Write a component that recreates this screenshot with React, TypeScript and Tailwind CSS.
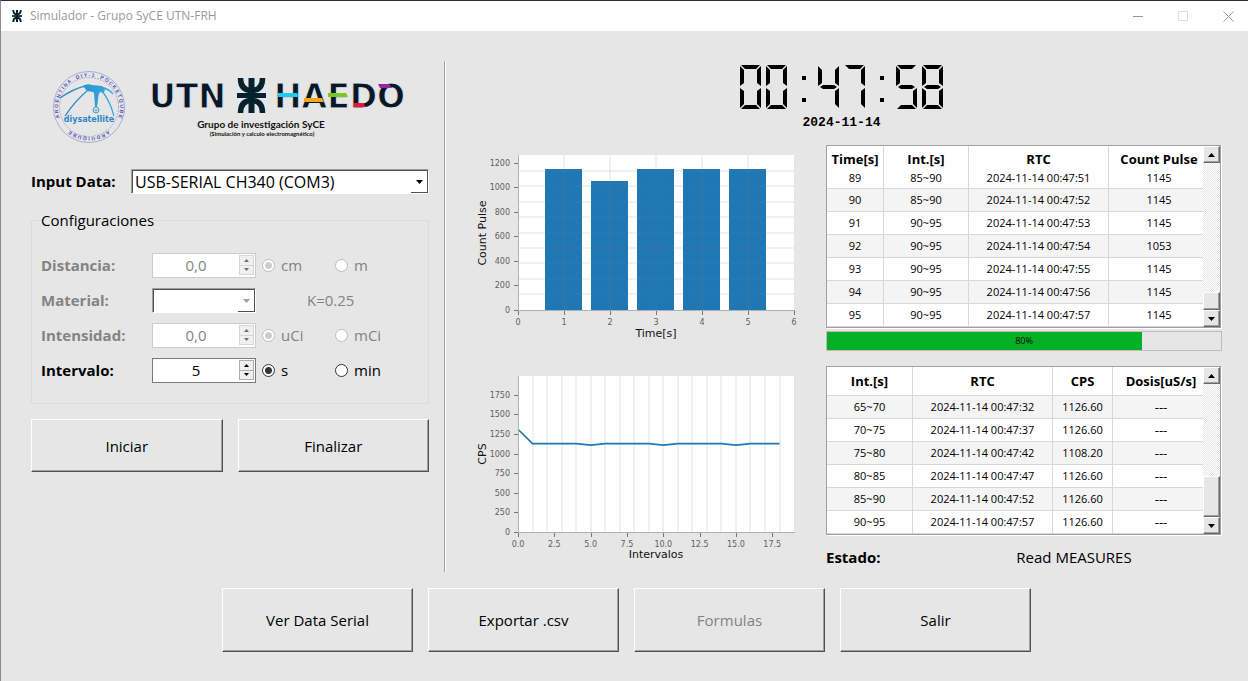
import React from "react";

const UI = "font-['Open_Sans','Noto_Sans',sans-serif]";

const SEGMENTS: Record<string, string> = {
  a: "1,0 20,0 16,4 5,4",
  b: "21,1 21,21 17,18 17,5",
  c: "21,23 21,43 17,39 17,26",
  d: "1,44 20,44 16,40 5,40",
  e: "0,23 0,43 4,39 4,26",
  f: "0,1 0,21 4,18 4,5",
  g: "2,22 5,20 16,20 19,22 16,24 5,24",
};

const LIT: Record<string, string> = {
  "0": "abcdef",
  "4": "bcfg",
  "5": "acdfg",
  "7": "abc",
  "8": "abcdefg",
};

function LcdClock({ value }: { value: string }) {
  return (
    <svg className="shrink-0" role="img" aria-label={value} width="203" height="44" viewBox="0 0 203 44">
      {value.split("").map((ch, i) => (
        <g key={i} transform={`translate(${i * 26} 0)`}>
          {ch === ":" ? (
            <>
              <rect x="10" y="11" width="4" height="4" />
              <rect x="10" y="33" width="4" height="4" />
            </>
          ) : (
            LIT[ch].split("").map((s) => <polygon key={s} points={SEGMENTS[s]} />)
          )}
        </g>
      ))}
    </svg>
  );
}

function Emblem() {
  return (
    <g fill="none" stroke="#06222f" strokeWidth="5">
      <path d="M14.5 0V35" strokeWidth="6" />
      <path d="M0 17.5H29" strokeWidth="5" />
      <path d="M3.500 0C3.500 8 7 12.500 14.500 12.500S25.500 8 25.500 0" strokeWidth="5.500" />
      <path d="M3.500 35C3.500 27 7 22.500 14.500 22.500S25.500 27 25.500 35" strokeWidth="5.500" />
    </g>
  );
}

function SatelliteLogo() {
  return (
    <svg className="shrink-0" width="76" height="76" viewBox="0 0 76 76" role="img" aria-label="diysatellite">
      <defs>
        <path id="ring" d="M13 57A31 31 0 1 1 63 57" />
        <path id="ringLow" d="M64 54A31 31 0 0 1 12 54" />
        <linearGradient id="sky" gradientUnits="userSpaceOnUse" x1="8" y1="0" x2="66" y2="0">
          <stop offset="0" stopColor="#2d7fc0" />
          <stop offset="1" stopColor="#35aee6" />
        </linearGradient>
      </defs>
      <g fill="none" stroke="#9a9ad4" strokeWidth="0.8">
        <circle cx="38" cy="38" r="35.5" />
        <circle cx="38" cy="38" r="29.500" strokeDasharray="2 1" />
      </g>
      <g className="font-['Liberation_Sans',sans-serif] font-bold" fill="#5252b4" fontSize="5">
        <text><textPath href="#ring" startOffset="50%" textAnchor="middle">A R G E N T I N A &#160;&#160; D I Y - 1 &#160;&#160; P O C K E T Q U B E</textPath></text>
        <text><textPath href="#ringLow" startOffset="50%" textAnchor="middle">A R D U I Q U B E</textPath></text>
      </g>
      <path d="M32 17Q36 14 41 16L51 17 54 20 53 24 49 23 48 25 44 25 42 23 36 22Z" fill="url(#sky)" />
      <path d="M34 17Q22 20 9 29M37 21Q24 32 14 47M50 18Q58 20 62 25M51 22Q59 32 63 47" fill="none" stroke="url(#sky)" strokeWidth="1.300" />
      <path d="M43 23H48L46 38H44Z" fill="url(#sky)" />
      <circle cx="45" cy="41" r="3" fill="none" stroke="#4b9ccc" />
      <path d="M42.500 41H47.500M45 41V44" stroke="#4b9ccc" strokeWidth="0.800" />
      <text x="38" y="53" textAnchor="middle" fill="#2d86c8" fontSize="8" className="font-['DejaVu_Sans',sans-serif] font-bold">diysatellite</text>
    </svg>
  );
}

function UtnLogo() {
  return (
    <svg className="shrink-0" width="260" height="68" viewBox="0 0 260 68" role="img" aria-label="UTN Haedo">
      <g fill="#06182a" stroke="#e6e6e6" strokeWidth="1" fontSize="33" className="font-['DejaVu_Sans',sans-serif] font-bold">
        <text x="0" y="35">UTN</text>
        <text x="125" y="35">HAEDO</text>
      </g>
      <g transform="translate(88 5)"><Emblem /></g>
      <path d="M129 20H148L150 24H129Z" fill="#19cdf2" />
      <path d="M155 25H173L175 29H155Z" fill="#f7a416" />
      <path d="M179 20H197L199 24H179Z" fill="#7cc823" />
      <path d="M205 30H214L217 34H205Z" fill="#ef1335" />
      <path d="M229 11H240L243 15H231Z" fill="#95259e" />
      <g className="font-['Lato',sans-serif] font-bold" fill="#111" textAnchor="middle">
        <text x="112" y="55" fontSize="10">Grupo de investigación SyCE</text>
        <text x="113" y="63" fontSize="6">(Simulación y calculo electromagnético)</text>
      </g>
    </svg>
  );
}

function Triangle({ up = false, color = "#000" }: { up?: boolean; color?: string }) {
  return (
    <svg width="7" height="4" viewBox="0 0 7 4" aria-hidden="true">
      <path d={up ? "M0 4 3.500 0 7 4Z" : "M0 0 3.500 4 7 0Z"} fill={color} />
    </svg>
  );
}

function SmallTriangle({ up = false, color = "#000" }: { up?: boolean; color?: string }) {
  return (
    <svg width="5" height="3" viewBox="0 0 5 3" aria-hidden="true">
      <path d={up ? "M0 3 2.500 0 5 3Z" : "M0 0 2.500 3 5 0Z"} fill={color} />
    </svg>
  );
}

function Combo({ id, options, disabled }: { id: string; options: string[]; disabled?: boolean }) {
  return (
    <div className="relative h-[25px] w-full border border-t-[#a0a0a0] border-l-[#a0a0a0] border-r-white border-b-white">
      <select
        id={id}
        disabled={disabled}
        className="block h-full w-full appearance-none border-t border-l border-[#505050] bg-white pl-[2px] text-[16px] leading-[20px] text-black opacity-100 outline-none"
      >
        {options.map((o) => <option key={o}>{o}</option>)}
      </select>
      <span className="pointer-events-none absolute top-px right-0 bottom-0 flex w-[17px] items-center justify-center border-r border-b border-[#505050]">
        <Triangle color={disabled ? "#a0a0a0" : "#000"} />
      </span>
    </div>
  );
}

function Spin({ id, value, disabled }: { id: string; value: string; disabled?: boolean }) {
  const tone = disabled ? "border-[#cccccc] text-[#838383]" : "border-[#7a7a7a] text-black";
  const step = disabled ? "border-[#d6d6d6] bg-[#f0f0f0]" : "border-[#adadad] bg-[#f0f0f0]";
  const arrow = disabled ? "#6d6d6d" : "#000";
  return (
    <div className={`flex h-[25px] w-full items-stretch border bg-white ${tone}`}>
      <input id={id} type="text" defaultValue={value} disabled={disabled} className="w-0 flex-1 bg-transparent text-center text-[15px] outline-none" />
      <div className="flex w-[16px] flex-col pt-px pr-px pb-[2px]">
        <button type="button" aria-label="Aumentar" disabled={disabled} className={`flex flex-1 items-center justify-center border ${step}`}><SmallTriangle up color={arrow} /></button>
        <button type="button" aria-label="Disminuir" disabled={disabled} className={`flex flex-1 items-center justify-center border border-t-0 ${step}`}><SmallTriangle color={arrow} /></button>
      </div>
    </div>
  );
}

function Radio({ name, label, checked, disabled }: { name: string; label: string; checked?: boolean; disabled?: boolean }) {
  return (
    <label className={`flex items-center gap-[6px] ${disabled ? "text-[#838383]" : "text-black"}`}>
      <input
        type="radio"
        name={name}
        defaultChecked={checked}
        disabled={disabled}
        className="size-[13px] shrink-0 appearance-none rounded-full border border-[#333] bg-white checked:bg-[radial-gradient(circle,#333_0_3px,#fff_4px)] disabled:border-[#bcbcbc] disabled:checked:bg-[radial-gradient(circle,#ccc_0_3px,#fff_4px)]"
      />
      {label}
    </label>
  );
}

function PushButton({ children, disabled, tall }: { children: string; disabled?: boolean; tall?: boolean }) {
  return (
    <button
      type="button"
      disabled={disabled}
      className={`flex-1 border border-t-white border-l-white border-r-[#505050] border-b-[#505050] pt-px text-[15px] shadow-[inset_-1px_-1px_0_#a0a0a0] disabled:text-[#838383] ${tall ? "h-[64px]" : "h-[53px]"}`}
    >
      {children}
    </button>
  );
}

function ScrollBar({ thumb }: { thumb: string }) {
  const raised = "border border-t-white border-l-white border-r-[#696969] border-b-[#696969] shadow-[inset_-1px_-1px_0_#a0a0a0] bg-[#e6e6e6]";
  return (
    <div className="flex w-[17px] shrink-0 flex-col bg-[repeating-conic-gradient(#e6e6e6_0_25%,#fff_0_50%)] bg-size-[2px_2px]">
      <button type="button" aria-label="Subir" className={`flex h-[17px] items-center justify-center ${raised}`}><Triangle up /></button>
      <div className="flex-1" />
      <div className={`${thumb} ${raised}`} />
      <button type="button" aria-label="Bajar" className={`flex h-[17px] items-center justify-center ${raised}`}><Triangle /></button>
    </div>
  );
}

type GridProps = {
  cols: string[];
  heads: string[];
  rows: string[][];
  headClass: string;
  firstRow: string;
  shade: number;
  thumb: string;
};

function DataGrid({ cols, heads, rows, headClass, firstRow, shade, thumb }: GridProps) {
  return (
    <div className="mr-px flex border border-[#a0a0a0] bg-white shadow-[1px_1px_0_#fff]">
      <table className="w-0 flex-1 table-fixed border-separate border-spacing-0 text-center">
        <colgroup>{cols.map((c, i) => <col key={i} className={c} />)}</colgroup>
        <thead>
          <tr>
            {heads.map((h) => (
              <th key={h} className={`border-r border-[#d8d8d8] p-0 text-[13px] leading-[16px] font-bold whitespace-nowrap last:border-r-0 last:pl-[6px] ${headClass}`}>{h}</th>
            ))}
          </tr>
        </thead>
        <tbody className="text-[11px] leading-[14px]">
          {rows.map((r, i) => (
            <tr key={i} className={i % 2 === shade ? "bg-[#f4f4f4]" : "bg-white"}>
              {r.map((c, j) => (
                <td key={j} className={`border-r border-b border-[#d8d8d8] p-0 whitespace-nowrap last:border-r-0 last:pl-[6px] ${c === "---" ? "text-[13px]" : ""} ${i === 0 ? firstRow : "h-[23px]"}`}>{c}</td>
              ))}
            </tr>
          ))}
        </tbody>
      </table>
      <ScrollBar thumb={thumb} />
    </div>
  );
}

const PULSES: [number, number][] = [[1, 1145], [2, 1053], [3, 1145], [4, 1145], [5, 1145]];
const CPS = [1310, 1127, 1127, 1127, 1127, 1108, 1127, 1127, 1127, 1127, 1108, 1127, 1127, 1127, 1127, 1108, 1127, 1127, 1127];

type AxesProps = {
  bottom: number;
  yTicks: { at: number; text: string }[];
  xTicks: { at: number; text: string }[];
  xLabel: string;
  yLabel: string;
};

function Axes({ bottom, yTicks, xTicks, xLabel, yLabel }: AxesProps) {
  return (
    <>
      <path d={`M57.500 10V${bottom + 0.5}H334`} fill="none" stroke="#b0b0b0" />
      <g stroke="#777">
        {yTicks.map((t) => <path key={t.text} d={`M53 ${Math.round(t.at) + 0.5}H57`} />)}
        {xTicks.map((t) => <path key={t.text} d={`M${Math.round(t.at) + 0.5} ${bottom + 1}v4`} />)}
      </g>
      <g fontSize="8" fill="#606060">
        {yTicks.map((t) => <text key={t.text} x="49" y={Math.round(t.at) + 3} textAnchor="end">{t.text}</text>)}
        {xTicks.map((t) => <text key={t.text} x={t.at} y={bottom + 15} textAnchor="middle">{t.text}</text>)}
      </g>
      <g fontSize="11" fill="#111" textAnchor="middle">
        <text x="195" y="192">{xLabel}</text>
        <text transform="translate(25 88) rotate(-90)">{yLabel}</text>
      </g>
    </>
  );
}

function PulseChart() {
  return (
    <svg viewBox="0 0 350 206" className="w-full font-['DejaVu_Sans',sans-serif]" role="img" aria-label="Count Pulse">
      <rect x="57" y="10" width="276" height="155" fill="#fff" />
      {PULSES.map(([t, v]) => {
        const top = Math.round(165 - v * 0.1228);
        return <rect key={t} x={38 + t * 46} y={top} width="37" height={165 - top} fill="#1f77b4" />;
      })}
      <g stroke="#808080" strokeOpacity="0.11" strokeWidth="2">
        {[1, 2, 3, 4, 5, 6, 7, 8, 9].map((k) => <path key={k} d={`M58 ${Math.round(164.5 - k * 15.4)}H333`} />)}
        {[1, 2, 3, 4, 5].map((k) => <path key={k} d={`M${57 + k * 46} 10V165`} />)}
      </g>
      <Axes
        bottom={165}
        yTicks={[0, 200, 400, 600, 800, 1000, 1200].map((v) => ({ at: 165 - v * 0.1228, text: String(v) }))}
        xTicks={[0, 1, 2, 3, 4, 5, 6].map((v) => ({ at: 57 + v * 46, text: String(v) }))}
        xLabel="Time[s]"
        yLabel="Count Pulse"
      />
    </svg>
  );
}

function CpsChart() {
  const x = (v: number) => 57 + v * 14.53;
  const y = (v: number) => 166 - v * 0.0784;
  return (
    <svg viewBox="0 0 350 206" className="w-full font-['DejaVu_Sans',sans-serif]" role="img" aria-label="CPS">
      <rect x="57" y="10" width="276" height="156" fill="#fff" />
      <g stroke="#808080" strokeOpacity="0.11" strokeWidth="2">
        {CPS.slice(1).map((_, k) => <path key={k} d={`M${Math.round(x(k + 1))} 10V166`} />)}
      </g>
      <polyline points={CPS.map((v, k) => `${x(k)},${y(v)}`).join(" ")} fill="none" stroke="#1f77b4" strokeWidth="1.600" />
      <Axes
        bottom={166}
        yTicks={[0, 250, 500, 750, 1000, 1250, 1500, 1750].map((v) => ({ at: y(v), text: String(v) }))}
        xTicks={[0, 2.5, 5, 7.5, 10, 12.5, 15, 17.5].map((v) => ({ at: x(v), text: v.toFixed(1) }))}
        xLabel="Intervalos"
        yLabel="CPS"
      />
    </svg>
  );
}

const PULSE_ROWS = [
  ["89", "85~90", "2024-11-14 00:47:51", "1145"],
  ["90", "85~90", "2024-11-14 00:47:52", "1145"],
  ["91", "90~95", "2024-11-14 00:47:53", "1145"],
  ["92", "90~95", "2024-11-14 00:47:54", "1053"],
  ["93", "90~95", "2024-11-14 00:47:55", "1145"],
  ["94", "90~95", "2024-11-14 00:47:56", "1145"],
  ["95", "90~95", "2024-11-14 00:47:57", "1145"],
];

const CPS_ROWS = [
  ["65~70", "2024-11-14 00:47:32", "1126.60", "---"],
  ["70~75", "2024-11-14 00:47:37", "1126.60", "---"],
  ["75~80", "2024-11-14 00:47:42", "1108.20", "---"],
  ["80~85", "2024-11-14 00:47:47", "1126.60", "---"],
  ["85~90", "2024-11-14 00:47:52", "1126.60", "---"],
  ["90~95", "2024-11-14 00:47:57", "1126.60", "---"],
];

function TitleBar() {
  return (
    <header className="flex h-[30px] items-center justify-between bg-white pl-[10px]">
      <div className="flex items-center gap-[7px]">
        <svg width="12" height="12" viewBox="-2 0 33 35" aria-hidden="true"><Emblem /></svg>
        <h1 className="text-[12px] text-[#999]">Simulador - Grupo SyCE UTN-FRH</h1>
      </div>
      <div className="flex gap-[5px]">
        <button type="button" aria-label="Minimizar" className="flex h-[30px] w-[40px] items-center justify-center">
          <svg width="11" height="11" viewBox="0 0 11 11"><path d="M0 5.500H10" stroke="#999" /></svg>
        </button>
        <button type="button" aria-label="Maximizar" disabled className="flex h-[30px] w-[40px] items-center justify-center">
          <svg width="11" height="11" viewBox="0 0 11 11"><rect x="0.500" y="0.500" width="9" height="9" fill="none" stroke="#ddd" /></svg>
        </button>
        <button type="button" aria-label="Cerrar" className="flex h-[30px] w-[40px] items-center justify-center">
          <svg width="11" height="11" viewBox="0 0 11 11"><path d="M0.500 0.500 10.500 10.500M10.500 0.500 0.500 10.500" stroke="#999" /></svg>
        </button>
      </div>
    </header>
  );
}

function Settings() {
  const label = "font-bold";
  const row = "grid h-[25px] grid-cols-[105px_104px_67px_1fr] items-center gap-x-[6px]";
  return (
    <fieldset className="mt-[15px] border border-[#dcdcdc] px-[9px] pb-[20px] text-[15px]">
      <legend className="leading-[22px]">Configuraciones</legend>
      <div className="mt-[22px] flex flex-col gap-[10px]">
        <div className={`${row} text-[#838383]`}>
          <label htmlFor="distancia" className={label}>Distancia:</label>
          <Spin id="distancia" value="0,0" disabled />
          <Radio name="distancia-u" label="cm" checked disabled />
          <Radio name="distancia-u" label="m" disabled />
        </div>
        <div className={`${row} text-[#838383]`}>
          <label htmlFor="material" className={label}>Material:</label>
          <Combo id="material" options={[""]} disabled />
          <output className="col-span-2 pl-[45px]">K=0.25</output>
        </div>
        <div className={`${row} text-[#838383]`}>
          <label htmlFor="intensidad" className={label}>Intensidad:</label>
          <Spin id="intensidad" value="0,0" disabled />
          <Radio name="intensidad-u" label="uCi" checked disabled />
          <Radio name="intensidad-u" label="mCi" disabled />
        </div>
        <div className={row}>
          <label htmlFor="intervalo" className={label}>Intervalo:</label>
          <Spin id="intervalo" value="5" />
          <Radio name="intervalo-u" label="s" checked />
          <Radio name="intervalo-u" label="min" />
        </div>
      </div>
    </fieldset>
  );
}

export default function App() {
  return (
    <div className={`flex min-h-screen flex-col border-t border-l border-t-[#2b2d38] border-l-[#8a8c94] bg-[#e6e6e6] text-black ${UI}`}>
      <TitleBar />
      <main className="flex flex-col pt-[30px] pr-[26px] pl-[30px]">
        <div className="grid grid-cols-[398fr_2px_761fr] gap-x-[15px]">
          <section className="flex flex-col">
            <div className="flex h-[92px] items-center gap-[22px] pl-[20px]">
              <SatelliteLogo />
              <UtnLogo />
            </div>
            <div className="mt-[16px] flex items-center">
              <label htmlFor="puerto" className="w-[100px] shrink-0 text-[15px] font-bold">Input Data:</label>
              <Combo id="puerto" options={["USB-SERIAL CH340 (COM3)"]} />
            </div>
            <Settings />
            <div className="mt-[15px] flex gap-[15px]">
              <PushButton>Iniciar</PushButton>
              <PushButton>Finalizar</PushButton>
            </div>
          </section>
          <div className="border-r border-l border-r-white border-l-[#a0a0a0]" />
          <section className="flex flex-col">
            <div className="flex h-[84px] flex-col items-center pt-[4px]">
              <LcdClock value="00:47:58" />
              <time className="mt-[6px] font-['Liberation_Mono',monospace] text-[13px] leading-[16px] font-bold">2024-11-14</time>
            </div>
            <div className="grid grid-cols-[350fr_396fr] gap-x-[15px]">
              <div className="flex flex-col gap-[15px]">
                <PulseChart />
                <CpsChart />
              </div>
              <div className="flex flex-col">
                <DataGrid
                  cols={["w-[57px]", "w-[85px]", "w-[140px]", "w-auto"]}
                  heads={["Time[s]", "Int.[s]", "RTC", "Count Pulse"]}
                  rows={PULSE_ROWS}
                  headClass="h-[25px]"
                  firstRow="h-[18px] pb-[3px]"
                  shade={1}
                  thumb="h-[18px]"
                />
                <div role="progressbar" aria-valuenow={80} aria-label="Progreso" className="relative mt-[3px] h-[20px] border border-[#bcbcbc]">
                  <div className="h-full w-4/5 bg-[#06b025]" />
                  <span className="absolute inset-0 flex items-center justify-center text-[9px]">80%</span>
                </div>
                <div className="mt-[15px]">
                  <DataGrid
                    cols={["w-[86px]", "w-[140px]", "w-[60px]", "w-auto"]}
                    heads={["Int.[s]", "RTC", "CPS", "Dosis[uS/s]"]}
                    rows={CPS_ROWS}
                    headClass="h-[29px] border-b"
                    firstRow="h-[23px]"
                    shade={0}
                    thumb="h-[41px]"
                  />
                </div>
                <div className="mt-[11px] flex items-center text-[15px] leading-[22px]">
                  <span className="w-[100px] font-bold">Estado:</span>
                  <span className="flex-1 text-center">Read MEASURES</span>
                </div>
              </div>
            </div>
          </section>
        </div>
        <div className="mt-[16px] flex gap-[15px] pr-[191px] pl-[191px]">
          <PushButton tall>Ver Data Serial</PushButton>
          <PushButton tall>Exportar .csv</PushButton>
          <PushButton tall disabled>Formulas</PushButton>
          <PushButton tall>Salir</PushButton>
        </div>
      </main>
    </div>
  );
}
